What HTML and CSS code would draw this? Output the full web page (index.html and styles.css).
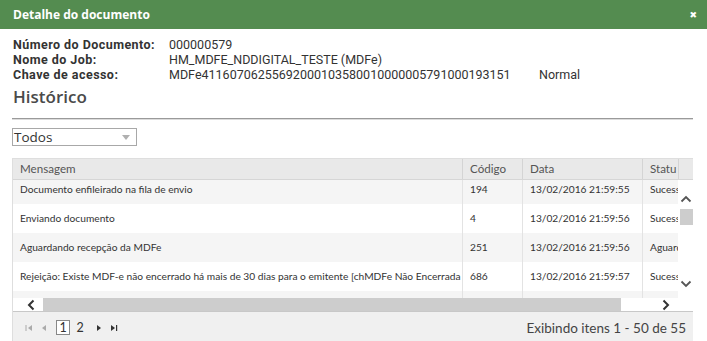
FILE: index.html
```html
<!DOCTYPE html>
<html lang="pt-BR">
<head>
<meta charset="utf-8">
<title>Detalhe do documento</title>
<link rel="stylesheet" href="styles.css">
</head>
<body>
<div class="dialog">
  <div class="titlebar">
    <span class="title">Detalhe do documento</span>
    <span class="close">&#x2716;</span>
  </div>
  <div class="content">
    <div class="info">
      <div class="lbl">Número do Documento:</div><div class="val">000000579</div><div></div>
      <div class="lbl">Nome do Job:</div><div class="val">HM_MDFE_NDDIGITAL_TESTE (MDFe)</div><div></div>
      <div class="lbl">Chave de acesso:</div><div class="val">MDFe41160706255692000103580010000005791000193151</div><div class="val">Normal</div>
    </div>
    <div class="section-title">Histórico</div>
    <div class="rule"></div>
    <div class="select">
      <span class="select-text">Todos</span>
      <span class="select-arrow"></span>
    </div>
    <div class="grid">
      <div class="grid-head">
        <div class="hc c-msg">Mensagem</div>
        <div class="hc c-cod">Código</div>
        <div class="hc c-data">Data</div>
        <div class="hc c-status">Statu</div>
        <div class="hc c-sb"></div>
      </div>
      <div class="grid-body">
        <div class="rows-viewport">
          <div class="rows">
            <div class="row alt"><div class="c c-msg">Documento enfileirado na fila de envio</div><div class="c c-cod">194</div><div class="c c-data">13/02/2016 21:59:55</div><div class="c c-status">Sucesso</div></div>
            <div class="row"><div class="c c-msg">Enviando documento</div><div class="c c-cod">4</div><div class="c c-data">13/02/2016 21:59:56</div><div class="c c-status">Sucesso</div></div>
            <div class="row alt"><div class="c c-msg">Aguardando recepção da MDFe</div><div class="c c-cod">251</div><div class="c c-data">13/02/2016 21:59:56</div><div class="c c-status">Aguardando</div></div>
            <div class="row"><div class="c c-msg">Rejeição: Existe MDF-e não encerrado há mais de 30 dias para o emitente [chMDFe Não Encerrada</div><div class="c c-cod">686</div><div class="c c-data">13/02/2016 21:59:57</div><div class="c c-status">Sucesso</div></div>
            <div class="row alt"><div class="c c-msg">&nbsp;</div><div class="c c-cod"></div><div class="c c-data"></div><div class="c c-status"></div></div>
          </div>
        </div>
        <div class="vscroll">
          <svg class="vs-up" width="12" height="8" viewBox="0 0 12 8"><path d="M1.5 6.5 L6 2 L10.5 6.5" fill="none" stroke="#555" stroke-width="1.8"/></svg>
          <div class="vs-thumb"></div>
          <div class="vs-fill"></div>
          <svg class="vs-down" width="12" height="8" viewBox="0 0 12 8"><path d="M1.5 1.5 L6 6 L10.5 1.5" fill="none" stroke="#555" stroke-width="1.8"/></svg>
        </div>
      </div>
      <div class="hscroll">
        <svg class="hs-left" width="8" height="12" viewBox="0 0 8 12"><path d="M6.5 1.5 L2 6 L6.5 10.5" fill="none" stroke="#333" stroke-width="2"/></svg>
        <div class="hs-thumb"></div>
        <svg class="hs-right" width="8" height="12" viewBox="0 0 8 12"><path d="M1.5 1.5 L6 6 L1.5 10.5" fill="none" stroke="#333" stroke-width="2"/></svg>
        <div class="hs-corner"></div>
      </div>
      <div class="pager">
        <div class="pager-nav">
          <svg class="pg-ico" width="8" height="8" viewBox="0 0 8 8"><rect x="0.5" y="1" width="1" height="6" fill="#aaa"/><path d="M7 1 L3 4 L7 7 Z" fill="#aaa"/></svg>
          <svg class="pg-ico" width="8" height="8" viewBox="0 0 8 8"><path d="M6 1 L2 4 L6 7 Z" fill="#aaa"/></svg>
          <span class="pg-num current">1</span>
          <span class="pg-num">2</span>
          <svg class="pg-ico next" width="8" height="8" viewBox="0 0 8 8"><path d="M2 1 L6 4 L2 7 Z" fill="#333"/></svg>
          <svg class="pg-ico" width="8" height="8" viewBox="0 0 8 8"><path d="M1 1 L5 4 L1 7 Z" fill="#333"/><rect x="6" y="1" width="1.2" height="6" fill="#333"/></svg>
        </div>
        <div class="pager-info">Exibindo itens 1 - 50 de 55</div>
      </div>
    </div>
  </div>
</div>
</body>
</html>
```
FILE: styles.css
```css
* { box-sizing: border-box; }
html, body { margin: 0; padding: 0; background: #fff; }
body {
  font-family: "Lato", "Open Sans", "DejaVu Sans", sans-serif;
  color: #333;
  width: 707px;
  height: 341px;
  overflow: hidden;
}
.titlebar {
  height: 29px;
  background: #548c50;
  display: flex;
  align-items: center;
  justify-content: space-between;
  padding: 0 10px 0 13px;
}
.title {
  font-family: "Open Sans", "Lato", sans-serif;
  color: #fff;
  font-weight: 700;
  font-size: 12px;
}
.close {
  color: #fff;
  font-size: 9px;
  line-height: 1;
}
.content {
  padding: 8px 14px 0 12px;
}
.info {
  display: grid;
  grid-template-columns: 156px 370px auto;
  font-family: "Roboto", "Open Sans", sans-serif;
  font-size: 12.5px;
  line-height: 15px;
  color: #333;
  padding-left: 1px;
}
.lbl { font-weight: 700; letter-spacing: 0.45px; white-space: nowrap; }
.val { white-space: nowrap; }
.section-title {
  font-family: "Open Sans", "Lato", sans-serif;
  font-size: 17px;
  font-weight: 600;
  color: #4a4a4a;
  margin-top: 3px;
  line-height: 23px;
  padding-left: 1px;
}
.rule {
  margin-top: 10px;
  height: 2px;
  border-top: 1px solid #9a9a9a;
  border-bottom: 1px solid #dcdcdc;
}
.select {
  margin-top: 8px;
  width: 125px;
  height: 18px;
  border: 1px solid #a8a8a8;
  display: flex;
  align-items: center;
  justify-content: space-between;
  padding: 0 6px 0 1px;
}
.select-text {
  font-family: "Open Sans", "Lato", sans-serif;
  font-size: 13.5px;
  color: #333;
  line-height: 16px;
}
.select-arrow {
  width: 0;
  height: 0;
  border-left: 4px solid transparent;
  border-right: 4px solid transparent;
  border-top: 5px solid #b0b0b0;
}
.grid {
  margin-top: 12px;
  width: 681px;
  border-left: 1px solid #dedede;
  border-top: 1px solid #dedede;
}
.grid-head {
  display: flex;
  height: 21px;
  background: #e9e9e9;
  border-bottom: 1px solid #d6d6d6;
}
.hc {
  font-size: 11.6px;
  color: #555;
  line-height: 20px;
  padding-left: 7px;
  border-left: 1px solid #d4d4d4;
  white-space: nowrap;
  overflow: hidden;
}
.hc.c-msg { border-left: none; }
.c-msg { width: 449px; flex: none; }
.c-cod { width: 60px; flex: none; }
.c-data { width: 120px; flex: none; }
.c-status { width: 36px; flex: none; }
.c-sb { width: 15px; flex: none; padding: 0; }
.grid-body {
  display: flex;
  height: 118px;
}
.rows-viewport {
  width: 665px;
  height: 118px;
  overflow: hidden;
}
.rows { margin-top: -5px; }
.row {
  display: flex;
  height: 29px;
  background: #fff;
}
.row.alt { background: #f5f5f5; }
.c {
  font-size: 10.2px;
  color: #333;
  line-height: 29px;
  padding-left: 7px;
  white-space: nowrap;
  overflow: hidden;
  border-left: 1px solid #e3e3e3;
}
.c.c-msg { border-left: none; }
.vscroll {
  width: 15px;
  height: 118px;
  background: #fff;
  display: flex;
  flex-direction: column;
  align-items: center;
  padding-top: 15px;
}
.vs-up { flex: none; }
.vs-thumb {
  margin-top: 6px;
  width: 13px;
  height: 16px;
  background: #cdcdcd;
  margin-left: 2px;
}
.vs-fill { flex: 1; }
.vs-down { flex: none; margin-bottom: 10px; }
.hscroll {
  display: flex;
  align-items: center;
  height: 14px;
  border-bottom: 1px solid #c8c8c8;
  background: #fff;
}
.hs-left { margin-left: 14px; flex: none; }
.hs-thumb {
  margin-left: 8px;
  width: 578px;
  height: 13px;
  background: #cdcdcd;
}
.hs-right { margin-left: 41px; flex: none; }
.hs-corner { flex: 1; }
.pager {
  height: 31px;
  background: #f0f0f0;
  display: flex;
  align-items: center;
  justify-content: space-between;
  padding: 0 7px 0 12px;
}
.pager-nav {
  display: flex;
  align-items: center;
}
.pg-ico { margin-right: 7px; }
.pg-ico.next { margin-left: 7px; }
.pg-num {
  font-size: 12.5px;
  color: #333;
  width: 14px;
  height: 15px;
  line-height: 13px;
  text-align: center;
  margin-right: 1px;
  border: 1px solid transparent;
}
.pg-num.current {
  border-color: #888;
  background: #fff;
  margin-left: 1px;
  margin-right: 3px;
}
.pager-info {
  font-size: 13.5px;
  color: #444;
}
```
